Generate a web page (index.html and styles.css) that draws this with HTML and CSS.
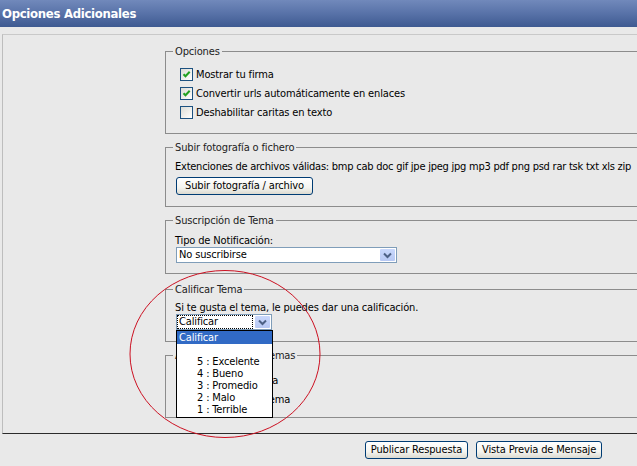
FILE: index.html
```html
<!DOCTYPE html>
<html lang="es">
<head>
<meta charset="utf-8">
<title>Opciones Adicionales</title>
<link rel="stylesheet" href="styles.css">
</head>
<body>
<div class="page">
  <div class="header">Opciones Adicionales</div>
  <div class="panel">
    <fieldset class="box box-opts">
      <legend>Opciones</legend>
      <label class="check"><span class="cb on"><svg viewBox="0 0 11 11" width="11" height="11"><path d="M2.5 5.2 L4.5 7.3 L8.7 2.8" fill="none" stroke="#21a121" stroke-width="2"/></svg></span>Mostrar tu firma</label>
      <label class="check"><span class="cb on"><svg viewBox="0 0 11 11" width="11" height="11"><path d="M2.5 5.2 L4.5 7.3 L8.7 2.8" fill="none" stroke="#21a121" stroke-width="2"/></svg></span>Convertir urls automáticamente en enlaces</label>
      <label class="check"><span class="cb"></span>Deshabilitar caritas en texto</label>
    </fieldset>

    <fieldset class="box box-upload">
      <legend>Subir fotografía o fichero</legend>
      <div class="line line-ext">Extenciones de archivos válidas: bmp cab doc gif jpe jpeg jpg mp3 pdf png psd rar tsk txt xls zip</div>
      <button class="btn btn-upload" type="button">Subir fotografía / archivo</button>
    </fieldset>

    <fieldset class="box box-sub">
      <legend>Suscripción de Tema</legend>
      <div class="line">Tipo de Notificación:</div>
      <div class="select select-sub">
        <span class="val">No suscribirse</span>
        <span class="arrow"><svg viewBox="0 0 9 7" width="9" height="7"><path d="M1 1.5 L4.5 5 L8 1.5" fill="none" stroke="#4d6185" stroke-width="2"/></svg></span>
      </div>
    </fieldset>

    <fieldset class="box box-rate">
      <legend>Calificar Tema</legend>
      <div class="line">Si te gusta el tema, le puedes dar una calificación.</div>
      <div class="select-wrap">
        <div class="select select-rate">
          <span class="val"><span class="focus">Calificar</span></span>
          <span class="arrow"><svg viewBox="0 0 9 7" width="9" height="7"><path d="M1 1.5 L4.5 5 L8 1.5" fill="none" stroke="#4d6185" stroke-width="2"/></svg></span>
        </div>
        <ul class="dropdown">
          <li class="sel">Calificar</li>
          <li class="blank">&nbsp;</li>
          <li class="opt">5 : Excelente</li>
          <li class="opt">4 : Bueno</li>
          <li class="opt">3 : Promedio</li>
          <li class="opt">2 : Malo</li>
          <li class="opt">1 : Terrible</li>
        </ul>
      </div>
    </fieldset>

    <fieldset class="box box-admin">
      <legend>Administración de Temas</legend>
      <label class="check"><span class="cb"></span>Cerrar este Tema</label>
      <label class="check"><span class="cb"></span>Fijar / Desfijar Tema</label>
    </fieldset>
  </div>
  <div class="actions">
    <button class="btn btn-action" type="button">Publicar Respuesta</button>
    <button class="btn btn-action" type="button">Vista Previa de Mensaje</button>
  </div>
  <svg class="circle" width="200" height="176" viewBox="0 0 200 176"><ellipse cx="100" cy="88" rx="95" ry="83.5" fill="none" stroke="#cc1122" stroke-width="1"/></svg>
</div>
</body>
</html>
```
FILE: styles.css
```css
html, body {
  margin: 0;
  padding: 0;
  overflow: hidden;
  background: #e9e9e9;
}
body {
  font-family: "DejaVu Sans Condensed", "DejaVu Sans", sans-serif;
  font-stretch: condensed;
  font-size: 11px;
  letter-spacing: -0.15px;
  color: #000;
}
.page {
  position: relative;
  width: 967px;
}
.header {
  height: 27px;
  line-height: 28px;
  padding-left: 2px;
  background: linear-gradient(#7189bb, #5872a8 50%, #3e5a91);
  color: #fff;
  font-family: "DejaVu Sans", sans-serif;
  font-stretch: condensed;
  font-weight: bold;
  font-size: 13px;
  letter-spacing: -0.3px;
  margin-bottom: 7px;
}
.panel {
  margin-left: 2px;
  border-top: 1px solid #c9c9c9;
  border-left: 1px solid #bdbdbd;
  border-bottom: 1px solid #2b2b2b;
  padding: 10px 0 15px 162px;
}
.box {
  margin: 0 0 7px 0;
  padding: 6px 0 11px 9px;
  border: 1px solid #8c8c8c;
  min-width: 0;
}
.box:last-child {
  margin-bottom: 0;
}
.box legend {
  margin-left: -2px;
  padding: 0 2px;
  line-height: 13px;
  color: #222;
}
.line {
  line-height: 13px;
  white-space: nowrap;
}
.line-ext {
  letter-spacing: -0.24px;
}
.check {
  display: flex;
  align-items: center;
  height: 19px;
  white-space: nowrap;
}
.box-opts .check:first-of-type {
  margin-top: 1px;
}
.cb {
  box-sizing: border-box;
  width: 13px;
  height: 13px;
  margin: 0 3px 0 5px;
  border: 1px solid #1c5180;
  background: linear-gradient(135deg, #dcdcd6, #ffffff);
  display: flex;
  align-items: center;
  justify-content: center;
}
.btn {
  font: inherit;
  letter-spacing: -0.15px;
  color: #000;
  height: 18px;
  padding: 0 8px;
  border: 1px solid #003c74;
  border-radius: 3px;
  background: linear-gradient(#ffffff, #f4f4f0 60%, #dcdad0);
  line-height: 16px;
  white-space: nowrap;
}
.btn-action {
  padding: 0 5px;
}
.btn-upload {
  margin-top: 4px;
  margin-left: 1px;
}
.box-sub {
  padding-top: 7px;
  padding-bottom: 10px;
  margin-bottom: 9px;
}
.select {
  box-sizing: border-box;
  display: flex;
  height: 16px;
  border: 1px solid #7f9db9;
  background: #fff;
  margin-left: 1px;
}
.select .val {
  flex: 1;
  line-height: 14px;
  padding-left: 2px;
  white-space: nowrap;
}
.select .arrow {
  width: 15px;
  margin: 1px;
  background: linear-gradient(#c9d8fc, #b7c8f3);
  border-radius: 1px;
  display: flex;
  align-items: center;
  justify-content: center;
}
.select-sub {
  width: 221px;
}
.box-rate {
  padding-top: 5px;
}
.select-wrap {
  position: relative;
  width: 97px;
  margin-left: 1px;
}
.select-rate {
  width: 96px;
  margin-left: 0;
}
.select-rate .val {
  padding-left: 1px;
  padding-top: 1px;
  padding-right: 2px;
  line-height: 12px;
}
.focus {
  display: block;
  outline: 1px dotted #000;
  padding-left: 1px;
}
.dropdown {
  position: absolute;
  left: 0;
  top: 100%;
  width: 97px;
  box-sizing: border-box;
  margin: 0;
  padding: 0 0 1px 0;
  list-style: none;
  border: 1px solid #000;
  background: #fff;
  z-index: 2;
}
.dropdown li {
  height: 12px;
  line-height: 12px;
  padding-left: 2px;
  white-space: nowrap;
}
.dropdown li.sel {
  height: 13px;
  line-height: 13px;
  background: #316ac5;
  color: #fff;
}
.dropdown li.opt {
  padding-left: 20px;
}
.box-admin {
  padding-top: 9px;
  padding-bottom: 8px;
}
.actions {
  display: flex;
  justify-content: center;
  gap: 8px;
  padding-top: 7px;
}
.circle {
  position: absolute;
  left: 125px;
  top: 266px;
  z-index: 3;
  pointer-events: none;
}
```
